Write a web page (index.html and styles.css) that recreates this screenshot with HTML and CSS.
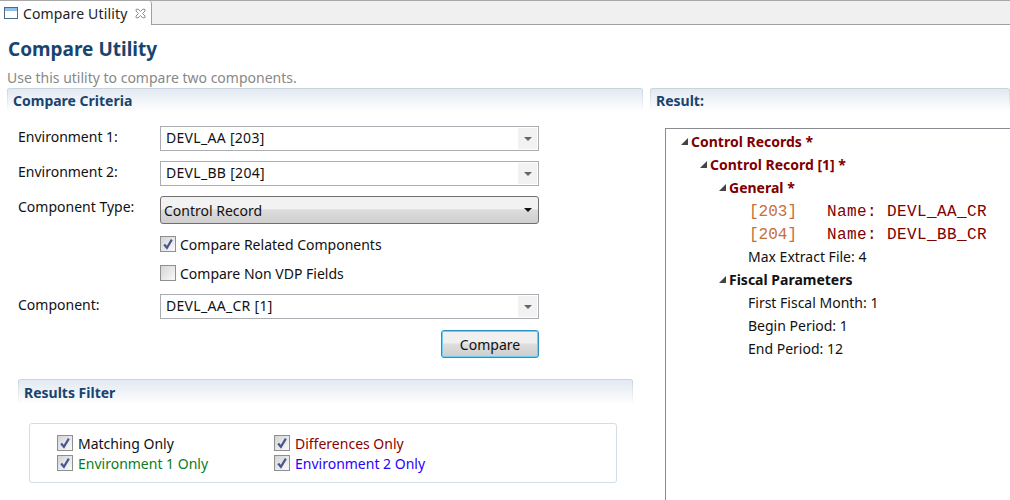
FILE: index.html

```html
<!DOCTYPE html>
<html lang="en">
<head>
  <meta charset="UTF-8" />
  <title>Compare Utility</title>
  <link rel="stylesheet" href="styles.css">
</head>
<body>

  <div class="tabbar">
    <div class="tab">
      <svg class="tab-icon" width="16" height="14" viewBox="0 0 16 14">
        <rect x="0.5" y="1.5" width="13" height="11" fill="#fff" stroke="#4a6a8a"/>
        <rect x="1" y="2" width="12" height="3" fill="#8fc0ea"/>
      </svg>
      <span>Compare Utility</span>
      <svg class="tab-close" width="11" height="11" viewBox="0 0 11 11">
        <path d="M1 1.5 L3 1 L5.5 3.5 L8 1 L10 1.5 L10 3 L7.5 5.5 L10 8 L10 9.5 L8 10 L5.5 7.5 L3 10 L1 9.5 L1 8 L3.5 5.5 L1 3 Z" fill="#fff" stroke="#8a8f94"/>
      </svg>
    </div>
  </div>

  <h1 class="page-title">Compare Utility</h1>
  <p class="page-desc">Use this utility to compare two components.</p>

  <div class="columns">

    <div class="left-col">
      <div class="section-head">Compare Criteria</div>

      <div class="form">
        <div class="row">
          <label>Environment 1:</label>
          <div class="combo"><span>DEVL_AA [203]</span><i class="combo-btn"><b></b></i></div>
        </div>
        <div class="row">
          <label>Environment 2:</label>
          <div class="combo"><span>DEVL_BB [204]</span><i class="combo-btn"><b></b></i></div>
        </div>
        <div class="row">
          <label>Component Type:</label>
          <div class="select"><span>Control Record</span><b></b></div>
        </div>
        <div class="check-row first">
          <span class="box on"><svg width="12" height="12" viewBox="0 0 11 11"><path d="M2 6 L4.5 9 L9 1.5" fill="none" stroke="#47568f" stroke-width="2"/></svg></span>
          Compare Related Components
        </div>
        <div class="check-row">
          <span class="box"></span>
          Compare Non VDP Fields
        </div>
        <div class="row comp">
          <label>Component:</label>
          <div class="combo"><span>DEVL_AA_CR [1]</span><i class="combo-btn"><b></b></i></div>
        </div>
        <div class="btn-row"><button>Compare</button></div>
      </div>

      <div class="filter">
        <div class="section-head">Results Filter</div>
        <div class="filter-box">
          <div class="filter-item"><span class="box on"><svg width="12" height="12" viewBox="0 0 11 11"><path d="M2 6 L4.5 9 L9 1.5" fill="none" stroke="#47568f" stroke-width="2"/></svg></span>Matching Only</div>
          <div class="filter-item red"><span class="box on"><svg width="12" height="12" viewBox="0 0 11 11"><path d="M2 6 L4.5 9 L9 1.5" fill="none" stroke="#47568f" stroke-width="2"/></svg></span>Differences Only</div>
          <div class="filter-item green"><span class="box on"><svg width="12" height="12" viewBox="0 0 11 11"><path d="M2 6 L4.5 9 L9 1.5" fill="none" stroke="#47568f" stroke-width="2"/></svg></span>Environment 1 Only</div>
          <div class="filter-item blue"><span class="box on"><svg width="12" height="12" viewBox="0 0 11 11"><path d="M2 6 L4.5 9 L9 1.5" fill="none" stroke="#47568f" stroke-width="2"/></svg></span>Environment 2 Only</div>
        </div>
      </div>
    </div>

    <div class="right-col">
      <div class="section-head">Result:</div>
      <div class="tree">
        <div class="node lvl0 diff"><i class="twisty"></i>Control Records *</div>
        <div class="node lvl1 diff"><i class="twisty"></i>Control Record [1] *</div>
        <div class="node lvl2 diff"><i class="twisty"></i>General *</div>
        <div class="node lvl3 mono"><em>[203]</em>   Name: DEVL_AA_CR</div>
        <div class="node lvl3 mono"><em>[204]</em>   Name: DEVL_BB_CR</div>
        <div class="node lvl3">Max Extract File: 4</div>
        <div class="node lvl2 plain"><i class="twisty"></i>Fiscal Parameters</div>
        <div class="node lvl3">First Fiscal Month: 1</div>
        <div class="node lvl3">Begin Period: 1</div>
        <div class="node lvl3">End Period: 12</div>
      </div>
    </div>

  </div>

</body>
</html>
```

FILE: styles.css

```css
html, body {
  margin: 0;
  height: 500px;
  overflow: hidden;
}
body {
  background-color: #fff;
  color: #111;
  font-family: "Noto Sans", Arial, sans-serif;
  font-size: 14px;
}

/* tab strip */
.tabbar {
  height: 23px;
  background-color: #f0f0f0;
  border-top: 1px solid #a8a8a8;
  border-bottom: 1px solid #a0a0a0;
  display: flex;
}
.tab {
  width: 152px;
  height: 24px;
  box-sizing: border-box;
  background-color: #fff;
  border-right: 1px solid #a0a0a0;
  border-top-right-radius: 3px;
  display: flex;
  align-items: center;
  padding-left: 4px;
  gap: 3px;
  color: #222;
  letter-spacing: 0.15px;
}
.tab-close {
  margin-left: 5px;
}

.page-title {
  margin: 0;
  padding: 10px 0 0 8px;
  height: 31px;
  font-size: 19px;
  line-height: 28px;
  font-weight: bold;
  color: #17456f;
}
.page-desc {
  margin: 0;
  padding: 2px 0 0 7px;
  height: 20px;
  line-height: 20px;
  color: #888;
}

.columns {
  display: flex;
  padding-left: 7px;
  gap: 7px;
}
.left-col {
  width: 636px;
  flex: none;
}
.right-col {
  flex: 1;
  min-width: 0;
}

/* side edges of the header fade out, so they are drawn as gradients */
.section-head {
  height: 24px;
  box-sizing: border-box;
  border-top: 1px solid #c8d4de;
  border-radius: 3px 3px 0 0;
  background:
    linear-gradient(#c8d4de, #fff) left top / 1px 100% no-repeat,
    linear-gradient(#c8d4de, #fff) right top / 1px 100% no-repeat,
    linear-gradient(#e3e9f2, #fff);
  padding-left: 6px;
  font-weight: bold;
  line-height: 23px;
  color: #17456f;
}

/* compare criteria */
.form {
  padding: 14px 0 0 11px;
  width: 521px;
}
.row {
  display: flex;
  margin-bottom: 10px;
}
.row label {
  width: 142px;
  flex: none;
  line-height: 22px;
}
.combo {
  flex: 1;
  height: 25px;
  box-sizing: border-box;
  border: 1px solid #abadb3;
  display: flex;
  justify-content: space-between;
  padding: 1px;
}
.combo span {
  padding-left: 4px;
  line-height: 20px;
  letter-spacing: 0.3px;
}
.combo-btn {
  width: 19px;
  background-color: #f2f2f2;
  display: flex;
  align-items: center;
  justify-content: center;
}
.combo-btn b {
  border-left: 4px solid transparent;
  border-right: 4px solid transparent;
  border-top: 4px solid #666;
}
.select {
  flex: 1;
  height: 28px;
  box-sizing: border-box;
  border: 1px solid #707070;
  border-radius: 3px;
  background: linear-gradient(#f2f2f2 0 45%, #dcdcdc 50%, #cfcfcf);
  display: flex;
  align-items: center;
  justify-content: space-between;
  padding: 0 6px 0 3px;
  margin-bottom: -3px;
}
.select b {
  border-left: 4px solid transparent;
  border-right: 4px solid transparent;
  border-top: 4px solid #111;
}
.check-row {
  display: flex;
  align-items: center;
  gap: 4px;
  height: 20px;
  padding-left: 142px;
  margin-bottom: 9px;
}
.check-row.first {
  margin-top: 13px;
}
.row.comp {
  margin-top: 11px;
  margin-bottom: 11px;
}
.box {
  width: 16px;
  height: 16px;
  box-sizing: border-box;
  border: 1px solid #8e8f8f;
  background: linear-gradient(135deg, #d4d4d8, #fafafa);
  display: inline-flex;
  align-items: center;
  justify-content: center;
  flex: none;
}
.btn-row {
  display: flex;
  justify-content: flex-end;
}
button {
  width: 98px;
  height: 28px;
  border: 1px solid #2c8fc4;
  border-radius: 3px;
  background: linear-gradient(#f0f0f0 0 45%, #dedede 50%, #cdcdcd);
  box-shadow: inset 0 0 0 1px #6fd0f0;
  font-family: inherit;
  font-size: 14px;
  color: #111;
  padding: 0;
}

/* filter */
.filter {
  margin: 21px 10px 0 11px;
}
.filter .section-head {
  height: 26px;
  line-height: 25px;
}
.filter-box {
  margin: 18px 16px 0 11px;
  height: 60px;
  box-sizing: border-box;
  border: 1px solid #d3dde6;
  border-radius: 3px;
  padding: 9px 0 0 27px;
  display: grid;
  grid-template-columns: 217px 1fr;
  grid-auto-rows: 20px;
}
.filter-item {
  display: flex;
  align-items: center;
  gap: 5px;
}
.red { color: #8b0000; }
.green { color: #0a7d1e; }
.blue { color: #2a00ff; }

/* result tree */
.tree {
  margin: 16px 0 0 15px;
  height: 370px;
  border-left: 1px solid #8a8a90;
  border-top: 1px solid #8a8a90;
  padding: 1px 0 0 0;
}
.node {
  height: 23px;
  box-sizing: border-box;
  line-height: 23px;
  white-space: pre;
  display: flex;
  align-items: center;
}
.lvl0 { padding-left: 25px; }
.lvl1 { padding-left: 44px; }
.lvl2 { padding-left: 63px; }
.lvl3 { padding-left: 82px; }
.diff {
  font-weight: bold;
  color: #7f0000;
}
.plain {
  font-weight: bold;
  color: #111;
}
.twisty {
  width: 0;
  height: 0;
  margin-left: -10px;
  margin-right: 3px;
  border-left: 7px solid transparent;
  border-bottom: 7px solid #444;
}
.mono {
  font-family: "Liberation Mono", monospace;
  font-size: 16px;
  letter-spacing: 0.4px;
  color: #7f0000;
  padding-left: 83px;
  padding-top: 3px;
}
.mono em {
  font-style: normal;
  letter-spacing: 0;
  color: #c4703a;
}
```
